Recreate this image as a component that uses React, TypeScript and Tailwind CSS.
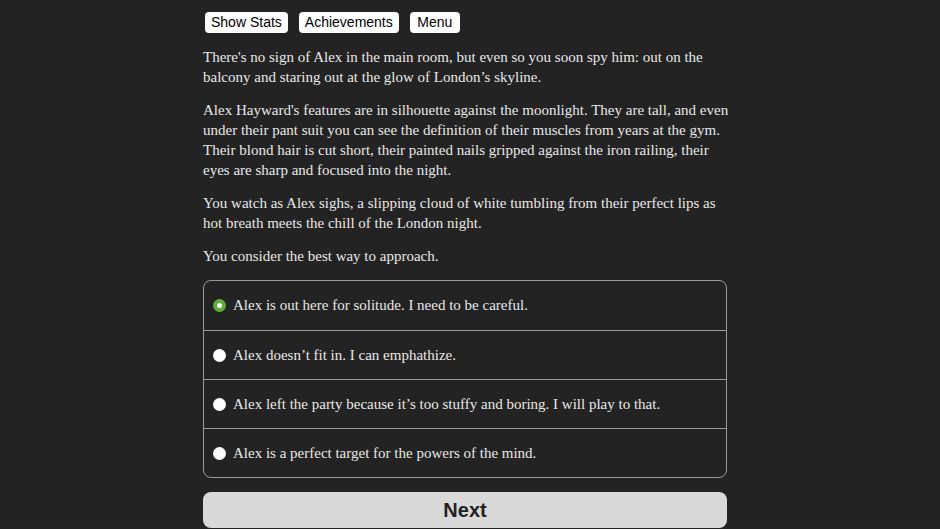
import React from "react";

const choices = [
  "Alex is out here for solitude. I need to be careful.",
  "Alex doesn\u2019t fit in. I can emphathize.",
  "Alex left the party because it\u2019s too stuffy and boring. I will play to that.",
  "Alex is a perfect target for the powers of the mind.",
];

export default function App() {
  return (
    <div className="flex min-h-[529px] w-full justify-center bg-[#232323] pr-[10px] text-[#e8e8e8]">
      <div className="w-[524px] pt-[12px]">
        <div className="flex gap-[11px] pl-[2px] font-['Liberation_Sans',Arial,sans-serif] text-[14px] text-black">
          <button className="h-[21px] rounded-[4px] bg-white px-[6px] leading-[21px]">Show Stats</button>
          <button className="h-[21px] rounded-[4px] bg-white px-[6px] leading-[21px]">Achievements</button>
          <button className="h-[21px] w-[50px] rounded-[4px] bg-white leading-[21px]">Menu</button>
        </div>
        <div className="mr-[-8px] mt-[14px] font-['Liberation_Serif','Times_New_Roman',serif] text-[15px] leading-[20px]">
          <p className="pr-[6px]">There's no sign of Alex in the main room, but even so you soon spy him: out on the balcony and staring out at the glow of London’s skyline.</p>
          <p className="mt-[13px]">Alex Hayward's features are in silhouette against the moonlight. They are tall, and even under their pant suit you can see the definition of their muscles from years at the gym. Their blond hair is cut short, their painted nails gripped against the iron railing, their eyes are sharp and focused into the night.</p>
          <p className="mt-[13px] pr-[8px]">You watch as Alex sighs, a slipping cloud of white tumbling from their perfect lips as hot breath meets the chill of the London night.</p>
          <p className="mt-[13px]">You consider the best way to approach.</p>
        </div>
        <div className="mt-[14px] rounded-[8px] border border-[#9a9a9a] font-['Liberation_Serif','Times_New_Roman',serif] text-[15px]">
          {choices.map((c, i) => (
            <div
              key={i}
              className={`flex h-[49px] items-center gap-[7px] pl-[9px] ${i > 0 ? "border-t border-[#9a9a9a]" : ""}`}
            >
              {i === 0 ? (
                <span className="flex h-[13px] w-[13px] items-center justify-center rounded-full bg-[#5fae3a]">
                  <span className="h-[5px] w-[5px] rounded-full bg-white" />
                </span>
              ) : (
                <span className="h-[13px] w-[13px] rounded-full bg-white" />
              )}
              <span>{c}</span>
            </div>
          ))}
        </div>
        <button className="mt-[14px] h-[36px] w-full rounded-[8px] bg-[#d9d9d9] font-['Liberation_Sans',Arial,sans-serif] text-[20px] font-bold text-[#222]">
          Next
        </button>
      </div>
    </div>
  );
}
